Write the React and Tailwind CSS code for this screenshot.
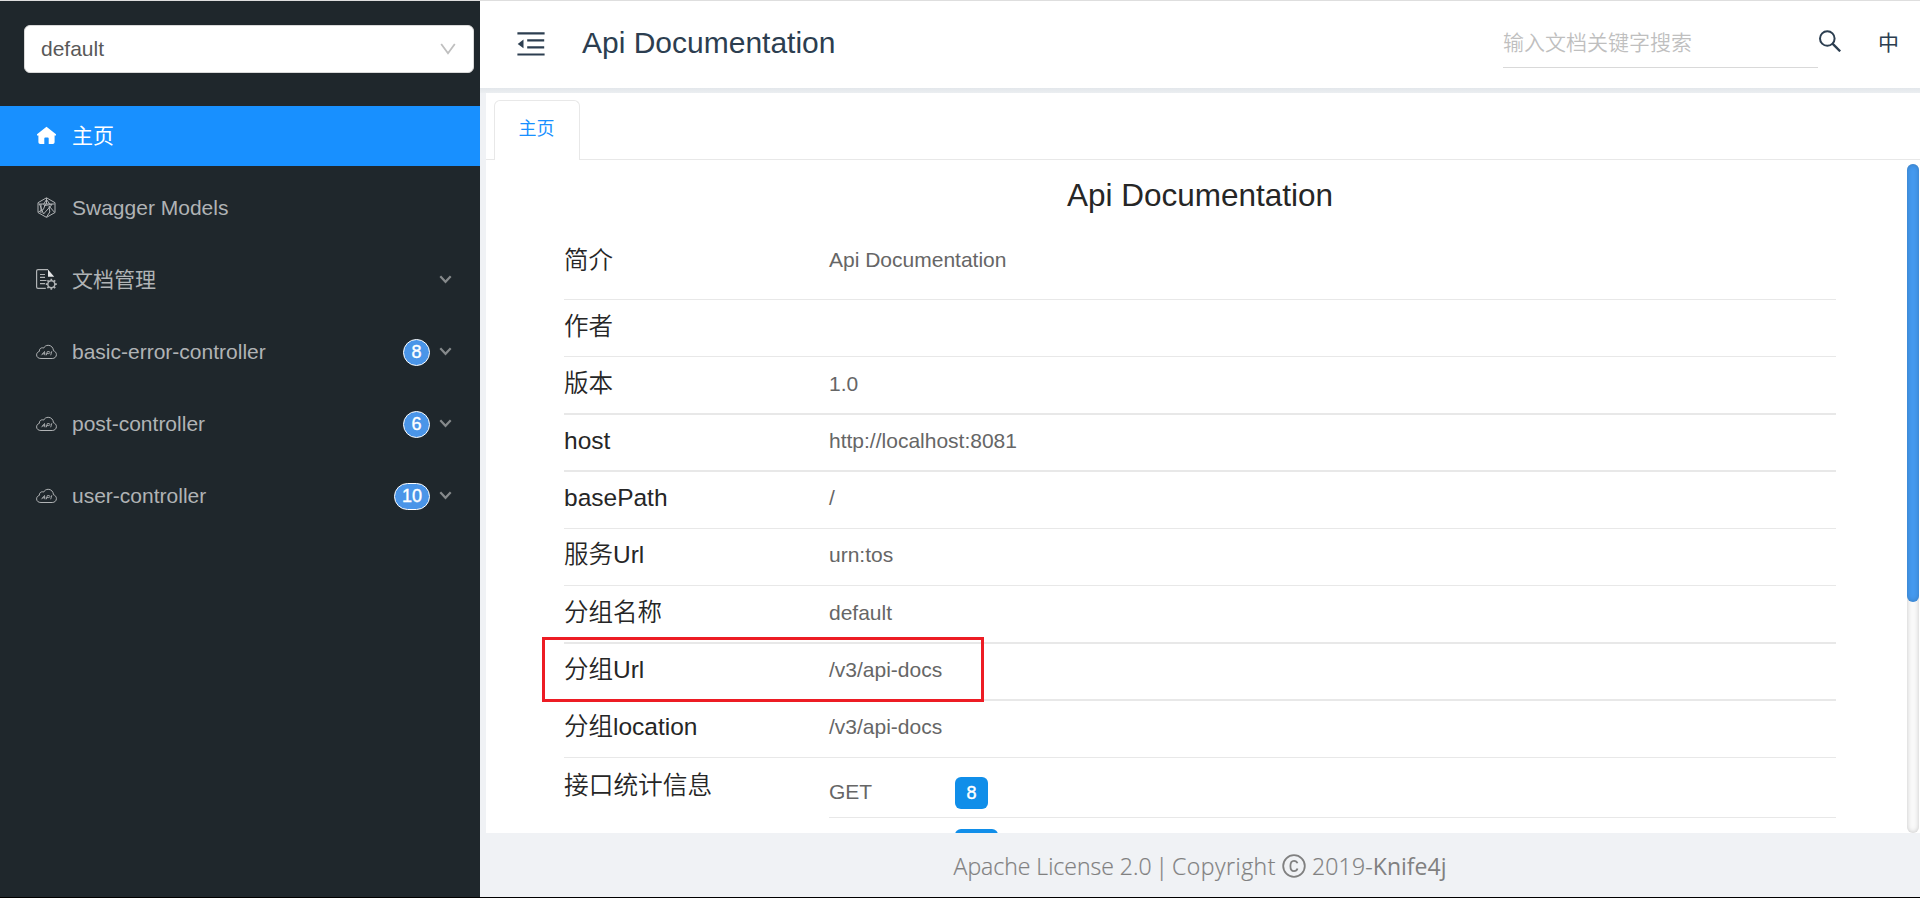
const api = { title: 'Api Documentation' };

const rows = [
  { label: '简介', value: 'Api Documentation', h: 'h-[76px]', line: 'border-b', pad: 'pt-[19px]', vpad: 'pt-[20px]' },
  { label: '作者', value: '', h: 'h-[57px]', line: 'border-b', pad: 'pt-[9px]', vpad: 'pt-[11px]' },
  { label: '版本', value: '1.0', h: 'h-[58px]', line: 'border-b-2', pad: 'pt-[9px]', vpad: 'pt-[11px]' },
  { label: 'host', value: 'http://localhost:8081', h: 'h-[57px]', line: 'border-b-2', pad: 'pt-[8px]', vpad: 'pt-[10px]' },
  { label: 'basePath', value: '/', h: 'h-[57px]', line: 'border-b', pad: 'pt-[8px]', vpad: 'pt-[10px]' },
  { label: '服务Url', value: 'urn:tos', h: 'h-[57px]', line: 'border-b', pad: 'pt-[8px]', vpad: 'pt-[10px]' },
  { label: '分组名称', value: 'default', h: 'h-[58px]', line: 'border-b-2', pad: 'pt-[9px]', vpad: 'pt-[11px]' },
  { label: '分组Url', value: '/v3/api-docs', h: 'h-[57px]', line: 'border-b-2', pad: 'pt-[8px]', vpad: 'pt-[10px]', marked: true },
  { label: '分组location', value: '/v3/api-docs', h: 'h-[57px]', line: 'border-b', pad: 'pt-[8px]', vpad: 'pt-[10px]' },
];

function HomeIcon() {
  return (
    <svg className="mb-[2px] h-[21px] w-[21px]" viewBox="0 0 21 21" fill="currentColor">
      <path d="M10.500 1.800 20 9.200v1.200h-1.400v6.600c0 1.200-.7 1.900-1.800 1.900h-4.100v-5.400a1 1 0 0 0-1-1H9.300a1 1 0 0 0-1 1v5.400H4.300c-1.200 0-1.900-.7-1.900-1.900v-6.600H1V9.200z" />
    </svg>
  );
}

function ModelIcon() {
  return (
    <svg className="mb-[2px] h-[21px] w-[21px]" viewBox="0 0 21 21" fill="none" stroke="currentColor" strokeWidth="1" strokeLinejoin="round">
      <path d="M10.500.800 19 5.700v9.800l-8.500 4.900L2 15.500V5.700z" />
      <path d="M10.500 1v6M2.500 7h16M2.300 15l5-2.500M18.500 15.300 13 9M7.300 12.500 9.500 7M3.500 7l4 10 8.500-9.500-8 1M10.500 2.500l-3 5M10.500 2.500l3.500 5M13 9.500l.8 5.500-3.300 5M5 7v9" />
    </svg>
  );
}

function DocIcon() {
  return (
    <svg className="mb-[2px] h-[21px] w-[21px]" viewBox="0 0 21 21" fill="none" stroke="currentColor" strokeWidth="1.200">
      <path d="M9.800 19.300H2c-.9 0-1.400-.5-1.400-1.400V2C.600 1.100 1.100.600 2 .600h10" />
      <path d="M12 .600v7.200h6.200z" fill="#e6e7e8" stroke="none" />
      <path d="M4 5.500h5M4 8.400h5M4 11.500h6.500M4 14.700h5" />
      <circle cx="15.300" cy="15.200" r="3.500" strokeWidth="1.500" />
      <path d="M15.300 9.700v2M15.300 18.700v2M9.800 15.200h2M18.800 15.200h2M11.400 11.300l1.400 1.400M17.800 17.700l1.400 1.400M11.400 19.100l1.400-1.400M17.800 12.700l1.400-1.400" strokeWidth="1.700" />
    </svg>
  );
}

function CloudIcon() {
  return (
    <svg className="mb-[2px] h-[21px] w-[21px]" viewBox="0 0 21 21" fill="none" stroke="currentColor" strokeWidth="1" strokeLinecap="round" strokeLinejoin="round">
      <path d="M4.600 17.500C2.200 17.500.600 16 .600 13.900c0-1.700 1-3 2.700-3.500-.1-2.400 1.500-3.800 3.300-3.600.4 0 .7.1 1 .3C8.500 5.300 10.300 4.300 12.200 4.300c2.900 0 5.100 2.200 5.300 5.500 1.800.5 2.900 2 2.900 3.800 0 2.200-1.700 3.900-3.800 3.900z" />
      <path d="M5.800 13.900l2.700-3.400.4 3.400M6.700 12.800h2M10.400 13.900l.9-3.300h1.700c1.400 0 1.100 2-.3 2h-1.700M14.800 13.900l.9-3.300" strokeWidth=".9" />
    </svg>
  );
}

const menu = [
  { text: 'Swagger Models', Icon: ModelIcon },
  { text: '文档管理', Icon: DocIcon, arrow: true },
  { text: 'basic-error-controller', Icon: CloudIcon, arrow: true, count: 8 },
  { text: 'post-controller', Icon: CloudIcon, arrow: true, count: 6 },
  { text: 'user-controller', Icon: CloudIcon, arrow: true, count: 10 },
];

function Sidebar() {
  return (
    <aside className="flex w-[480px] shrink-0 flex-col bg-[#1f272c] text-[21px] text-[#b0b3b5]">
      <div className="mt-6 ml-6 flex h-12 w-[450px] items-center justify-between rounded-[6px] border border-[#d9d9d9] bg-white pr-[17px] pl-[16px] text-[#595959]">
        <span>default</span>
        <svg className="h-[12px] w-[16px]" viewBox="0 0 16 12" fill="none" stroke="#bfbfbf" strokeWidth="1.800">
          <path d="M1.200 1 8 10.200 14.800 1" />
        </svg>
      </div>
      <nav className="mt-[33px] flex flex-col gap-3">
        <a className="flex h-[60px] items-center bg-[#1890ff] pl-9 text-white">
          <HomeIcon />
          <span className="mb-px ml-[15px]">主页</span>
        </a>
        {menu.map(({ text, Icon, arrow, count }) => (
          <a key={text} className="flex h-[60px] items-center pr-7 pl-9">
            <Icon />
            <span className="mb-px ml-[15px] grow">{text}</span>
            {count && (
              <span className="mr-[9px] flex h-[27px] min-w-[27px] items-center justify-center rounded-full border-[1.500px] border-white bg-[#4a95e8] px-[7px] text-[18px] text-white [-webkit-text-stroke:0.4px_white]">
                {count}
              </span>
            )}
            {arrow && (
              <svg className="mb-[2px] h-[9px] w-[13px]" viewBox="0 0 13 9" fill="none" stroke="#85898b" strokeWidth="2.200">
                <path d="M1.300 1.300 6.500 6.800l5.200-5.500" />
              </svg>
            )}
          </a>
        ))}
      </nav>
    </aside>
  );
}

function Header() {
  return (
    <header className="flex h-[87px] shrink-0 items-center bg-white text-[#2c3e50]">
      <svg className="mt-[-1px] ml-[37px] h-[24px] w-[28px]" viewBox="0 0 28 24" fill="none" stroke="currentColor" strokeWidth="2.200">
        <path d="M.400 1.400h27.200M10.200 8.400h17M10.200 15.400h17M.400 22.500h27.200" />
        <path d="M6.500 7.500v8.800L.700 11.900z" fill="currentColor" stroke="none" />
      </svg>
      <h1 className="mt-[-4px] ml-[37px] grow text-[30px] leading-10">{api.title}</h1>
      <div className="mt-[-2px] flex h-12 w-[315px] items-center border-b border-[#d9d9d9] text-[21px] font-[350] text-[#bfbfbf]">
        输入文档关键字搜索
      </div>
      <svg className="mt-[-7px] ml-[1px] h-[22px] w-[22px]" viewBox="0 0 22 22" fill="none" stroke="currentColor" strokeWidth="2">
        <circle cx="8.300" cy="8.500" r="7.300" />
        <path d="m13.500 13.700 7.700 7.600" strokeWidth="2.400" />
      </svg>
      <span className="mt-[-4px] mr-[21px] ml-[37px] text-[21px] leading-8">中</span>
    </header>
  );
}

function Badge({ children }) {
  return (
    <span className="flex h-8 min-w-[33px] items-center justify-center rounded-[6px] bg-[#108ee9] text-[18px] text-white [-webkit-text-stroke:0.4px_white]">
      {children}
    </span>
  );
}

function Content() {
  return (
    <div className="ml-[78px] flex h-[673px] w-[1272px] flex-col">
      <h2 className="mt-[14px] text-center text-[31.500px] leading-[42px] text-[#262626]">{api.title}</h2>
      <div className="mt-[8px] flex flex-col text-[#666]">
        {rows.map((r) => (
          <div key={r.label} className={`relative flex shrink-0 border-[#e8e8e8] ${r.h} ${r.line}`}>
            <div className={`w-[265px] text-[24.500px] leading-9 font-[350] text-[#262626] ${r.pad}`}>{r.label}</div>
            <div className={`text-[21px] leading-8 ${r.vpad}`}>{r.value}</div>
            {r.marked && <div className="absolute top-[-7px] left-[-22px] h-[65px] w-[442px] border-[3px] border-[#ed1c24]" />}
          </div>
        ))}
        <div className="flex">
          <div className="w-[265px] pt-[10px] text-[24.700px] leading-9 font-[350] text-[#262626]">接口统计信息</div>
          <div className="flex grow flex-col text-[21px]">
            <div className="flex h-[60px] items-start border-b border-[#e8e8e8] pt-[19px]">
              <span className="mt-[-1px] w-[126px] leading-8">GET</span>
              <Badge>8</Badge>
            </div>
            <div className="mt-[11px] ml-[126px] h-1 w-[43px] overflow-hidden">
              <div className="h-8 rounded-[6px] bg-[#108ee9]" />
            </div>
          </div>
        </div>
      </div>
    </div>
  );
}

export default function App() {
  return (
    <div className="flex h-[898px] w-[1920px] overflow-hidden border-t border-b border-t-[#dedede] border-b-black font-['Liberation_Sans','Noto_Sans_CJK_SC',sans-serif]">
      <Sidebar />
      <div className="flex w-[1440px] flex-col bg-[#f0f2f5]">
        <Header />
        <div className="h-[5px] shrink-0 bg-linear-to-b from-[#e3e7eb] to-[#ebeef1]" />
        <main className="ml-[6px] flex h-[740px] shrink-0 flex-col bg-white">
          <div className="flex h-[67px] shrink-0 pt-[7px]">
            <div className="w-2 border-b border-[#e8e8e8]" />
            <div className="flex w-[86px] items-center justify-center rounded-t-[6px] border border-b-0 border-[#e8e8e8] pr-px pb-[2px] text-[18px] text-[#1890ff]">
              主页
            </div>
            <div className="grow border-b border-[#e8e8e8]" />
          </div>
          <div className="flex grow">
            <div className="grow">
              <Content />
            </div>
            <div className="mt-1 mr-px h-[669px] w-3 rounded-full bg-[#f9f9f9] shadow-[inset_0_0_5px_rgba(0,0,0,0.2)]">
              <div className="h-[438px] rounded-full bg-[#4499ee] shadow-[inset_0_0_5px_rgba(0,0,0,0.2)]" />
            </div>
          </div>
        </main>
        <footer className="flex grow items-center justify-center pt-[2px] font-['Open_Sans','Noto_Sans',sans-serif] text-[23px] font-light text-[#808080] [-webkit-text-stroke:0.2px_#808080]">
          <span>Apache License 2.0</span>
          <span className="mx-[4px]">|</span>
          <span className="tracking-[0.5px]">Copyright</span>
          <svg className="mx-[6px] h-[24px] w-[24px]" viewBox="0 0 24 24" fill="none" stroke="currentColor" strokeWidth="1.800">
            <circle cx="12" cy="12" r="10.800" />
            <path d="M15.500 9.300c-.6-1.600-1.800-2.500-3.500-2.500-2.300 0-3.600 1.700-3.600 5.200s1.300 5.200 3.600 5.200c1.800 0 3-1 3.500-2.600" />
          </svg>
          <span className="tracking-[0.2px]">2019-</span>
          <span className="font-normal [-webkit-text-stroke:0]">Knife4j</span>
        </footer>
      </div>
    </div>
  );
}
